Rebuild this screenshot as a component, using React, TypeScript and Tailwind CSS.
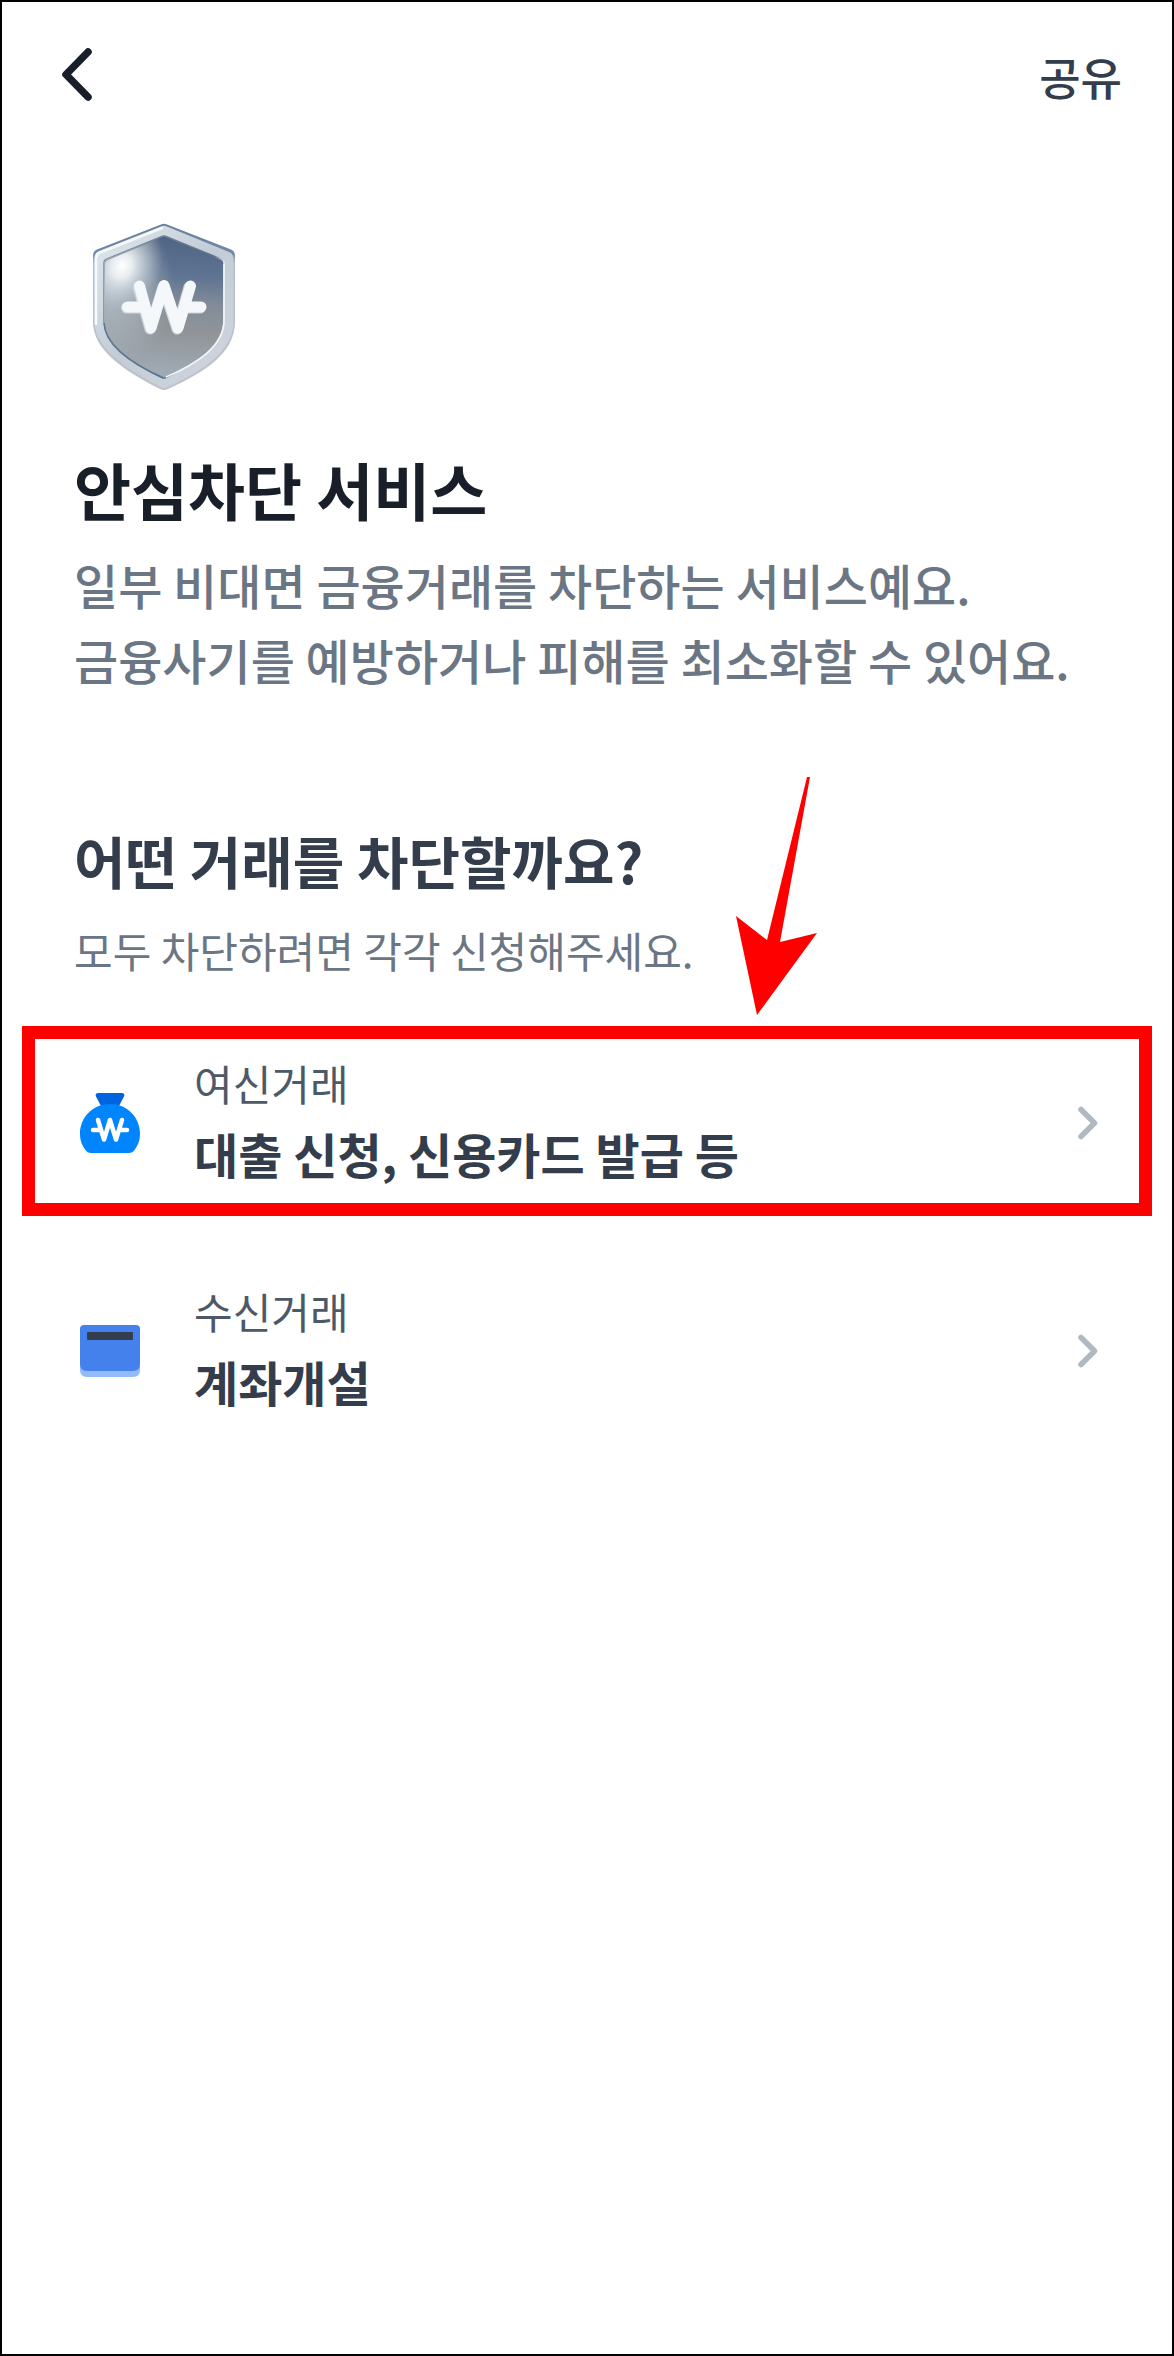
import type { ReactNode } from "react";

function BackIcon() {
  return (
    <svg viewBox="0 0 80 80" className="w-20 h-20" fill="none" aria-hidden="true">
      <path d="M48 12 26 34.500 48 57" stroke="#191f28" strokeWidth="7.500" strokeLinecap="round" strokeLinejoin="round" />
    </svg>
  );
}

function ChevronIcon() {
  return (
    <svg viewBox="0 0 32 40" className="w-8 h-10 shrink-0" fill="none" aria-hidden="true">
      <path d="M9 6.500 22.500 20 9 33.500" stroke="#b0b8c1" strokeWidth="5.500" strokeLinecap="round" strokeLinejoin="round" />
    </svg>
  );
}

function ShieldIcon() {
  return (
    <svg viewBox="74 218 180 180" className="w-[180px] h-[180px]" fill="none" aria-hidden="true">
      <defs>
        <linearGradient id="rim" x1="93" y1="240" x2="235" y2="370" gradientUnits="userSpaceOnUse">
          <stop offset="0" stopColor="#dfe6ec" />
          <stop offset="0.5" stopColor="#c3ccd6" />
          <stop offset="1" stopColor="#cfd5de" />
        </linearGradient>
        <linearGradient id="rimEdge" x1="164" y1="224" x2="164" y2="390" gradientUnits="userSpaceOnUse">
          <stop offset="0" stopColor="#66809f" />
          <stop offset="0.18" stopColor="#7089a8" />
          <stop offset="0.24" stopColor="#b4bfca" />
          <stop offset="1" stopColor="#bfc4ca" />
        </linearGradient>
        <linearGradient id="face" x1="180" y1="236" x2="172" y2="376" gradientUnits="userSpaceOnUse">
          <stop offset="0" stopColor="#4e6482" />
          <stop offset="0.28" stopColor="#5e7492" />
          <stop offset="0.48" stopColor="#828c98" />
          <stop offset="0.68" stopColor="#909498" />
          <stop offset="1" stopColor="#a0acb6" />
        </linearGradient>
        <radialGradient id="shine" cx="0" cy="0" r="1" gradientUnits="userSpaceOnUse" gradientTransform="translate(122 266) rotate(20) scale(40 48)">
          <stop offset="0" stopColor="#fff" />
          <stop offset="0.25" stopColor="#f2f5f7" stopOpacity="0.9" />
          <stop offset="0.65" stopColor="#c4cfd8" stopOpacity="0.5" />
          <stop offset="1" stopColor="#a9b4be" stopOpacity="0" />
        </radialGradient>
        <radialGradient id="haze" cx="0" cy="0" r="1" gradientUnits="userSpaceOnUse" gradientTransform="translate(110 290) scale(64 84)">
          <stop offset="0" stopColor="#b8c2cb" stopOpacity="0.9" />
          <stop offset="0.6" stopColor="#a8b1b9" stopOpacity="0.6" />
          <stop offset="1" stopColor="#a5adb4" stopOpacity="0" />
        </radialGradient>
        <linearGradient id="groove" x1="104" y1="250" x2="224" y2="300" gradientUnits="userSpaceOnUse">
          <stop offset="0" stopColor="#7f8b99" />
          <stop offset="0.8" stopColor="#5b7190" />
          <stop offset="0.9" stopColor="#eef2f6" />
        </linearGradient>
      </defs>
      <path
        d="M161 224.500Q164 223 167 224.500L231 249.500Q235 251 235 256V322C235 352 206 372 168 389Q164 391 160 389C122 370 93 349 93 322V256Q93 251 97 249.500Z"
        fill="url(#rimEdge)"
      />
      <path
        d="M161 226.500Q164 225 167 226.500L229 252Q233 253.500 233.500 258V322C233 350 204 371 167 387Q164 388.500 161 387C124 368 95 347 94.500 322V257Q95 253 98 251.500Z"
        fill="url(#rim)"
      />
      <path d="M96 324V259Q96 254 100 252.500L162 228" stroke="#f7fafc" strokeWidth="2.500" strokeLinecap="round" />
      <path
        d="M162 236.500Q164 235.500 166 236.500L221 259Q224 260 224 263V320C224 347 196 364 165 378H163C132 364 104 344 104 320V263Q104 260 107 259Z"
        fill="url(#face)"
        stroke="url(#groove)"
        strokeWidth="1.500"
      />
      <path
        d="M162 236.500Q164 235.500 166 236.500L221 259Q224 260 224 263V320C224 347 196 364 165 378H163C132 364 104 344 104 320V263Q104 260 107 259Z"
        fill="url(#haze)"
      />
      <path
        d="M162 237.500Q164 236.500 166 237.500L220 260Q223 261 223 264V320C223 347 196 364 165 377H163C132 364 105 344 105 320V264Q105 261 108 260Z"
        fill="url(#shine)"
      />
      <path d="M104 323C105 346 132 364 163.500 378" stroke="#5d7592" strokeWidth="1.500" />
      <path d="M166 377C196 364 224 347 224 320V264" stroke="#f1f4f7" strokeWidth="1.500" />
      <path d="M126.500 308H142M186 308H200M138 287 150 329 163 287 177 329 189 287" stroke="#cbd5de" strokeWidth="11" strokeLinecap="round" strokeLinejoin="round" />
      <path d="M127.500 307H142M186 307H201M139.500 286 151 328 164 285.500 178 328 190.500 286" stroke="#f4f8fb" strokeWidth="11" strokeLinecap="round" strokeLinejoin="round" />
    </svg>
  );
}

function MoneyBagIcon() {
  return (
    <svg viewBox="0 0 60 60" className="w-15 h-15 shrink-0" fill="none" aria-hidden="true">
      <path d="M18.500 0H41.500Q45.500 0 44 3.500L39 13H21L16 3.500Q14.500 0 18.500 0Z" fill="#0064e0" />
      <path d="M30 11C47 11 60 24 60 41C60 48 57.500 53 54.500 57Q52.500 60 49 60H11Q7.500 60 5.500 57C2.500 53 0 48 0 41C0 24 13 11 30 11Z" fill="#0085ff" />
      <path d="M13 37H20M40 37H47M18 27 24 46.500 30 27 36 46.500 42 27" stroke="#fff" strokeWidth="4.500" strokeLinecap="round" strokeLinejoin="round" />
    </svg>
  );
}

function BankbookIcon() {
  return (
    <svg viewBox="0 0 60 60" className="w-15 h-15 shrink-0" fill="none" aria-hidden="true">
      <path d="M0 12H60V49Q60 56 53 56H7Q0 56 0 49Z" fill="#91bbf9" />
      <path d="M0 8Q0 4 4 4H56Q60 4 60 8V43Q60 50 53 50H7Q0 50 0 43Z" fill="#4581ec" />
      <rect x="7" y="11" width="46" height="8" rx="1" fill="#333d4b" />
    </svg>
  );
}

// Hand-drawn pointer that sits over the heading and aims at the first row
function PointerArrow() {
  return (
    <svg viewBox="0 0 82 240" className="absolute right-[354px] bottom-[10px] w-[82px] h-60 pointer-events-none" aria-hidden="true">
      <path d="M71 1H74L44 166 81 157 21 239 0 140 31 164Z" fill="#f00" />
    </svg>
  );
}

type Row = {
  icon: ReactNode;
  label: string;
  title: string;
  highlighted: boolean;
};

const rows: Row[] = [
  { icon: <MoneyBagIcon />, label: "여신거래", title: "대출 신청, 신용카드 발급 등", highlighted: true },
  { icon: <BankbookIcon />, label: "수신거래", title: "계좌개설", highlighted: false },
];

export default function App() {
  return (
    <div className="min-h-screen bg-white border-2 border-black font-['Noto_Sans_CJK_KR',sans-serif]">
      <header className="flex items-center justify-between h-[156px] pl-[38px] pr-[50px]">
        <button type="button" aria-label="뒤로">
          <BackIcon />
        </button>
        <button type="button" className="pb-1.5 text-[45px] leading-[60px] font-medium text-[#333d4b]">
          공유
        </button>
      </header>

      <main>
        <section className="px-[72px] pt-[60px]">
          <ShieldIcon />
          <h1 className="mt-[51px] text-[62px] leading-[80px] font-bold text-[#191f28]">안심차단 서비스</h1>
          <p className="mt-[18px] text-[48px] leading-[75px] font-medium text-[#6b7684]">
            일부 비대면 금융거래를 차단하는 서비스예요.
            <br />
            금융사기를 예방하거나 피해를 최소화할 수 있어요.
          </p>
        </section>

        <section className="mt-[123px]">
          <div className="relative px-[72px] pb-[46px]">
            <h2 className="text-[56px] leading-[80px] font-bold text-[#333d4b]">어떤 거래를 차단할까요?</h2>
            <p className="mt-5 text-[42px] leading-[60px] text-[#6b7684]">모두 차단하려면 각각 신청해주세요.</p>
            <PointerArrow />
          </div>

          <ul className="flex flex-col gap-[38px] px-5">
            {rows.map((row) => (
              <li key={row.label}>
                <button
                  type="button"
                  className={`flex w-full items-center border-[13px] pt-[14px] pb-[10px] pl-[45px] pr-[35px] text-left ${
                    row.highlighted ? "border-[#ff0000]" : "border-transparent"
                  }`}
                >
                  {row.icon}
                  <span className="ml-[54px] flex flex-1 flex-col gap-[10px] pb-[10px]">
                    <span className="text-[42px] leading-[60px] text-[#4e5968]">{row.label}</span>
                    <span className="text-[48px] leading-[60px] font-bold text-[#333d4b]">{row.title}</span>
                  </span>
                  <ChevronIcon />
                </button>
              </li>
            ))}
          </ul>
        </section>
      </main>
    </div>
  );
}
